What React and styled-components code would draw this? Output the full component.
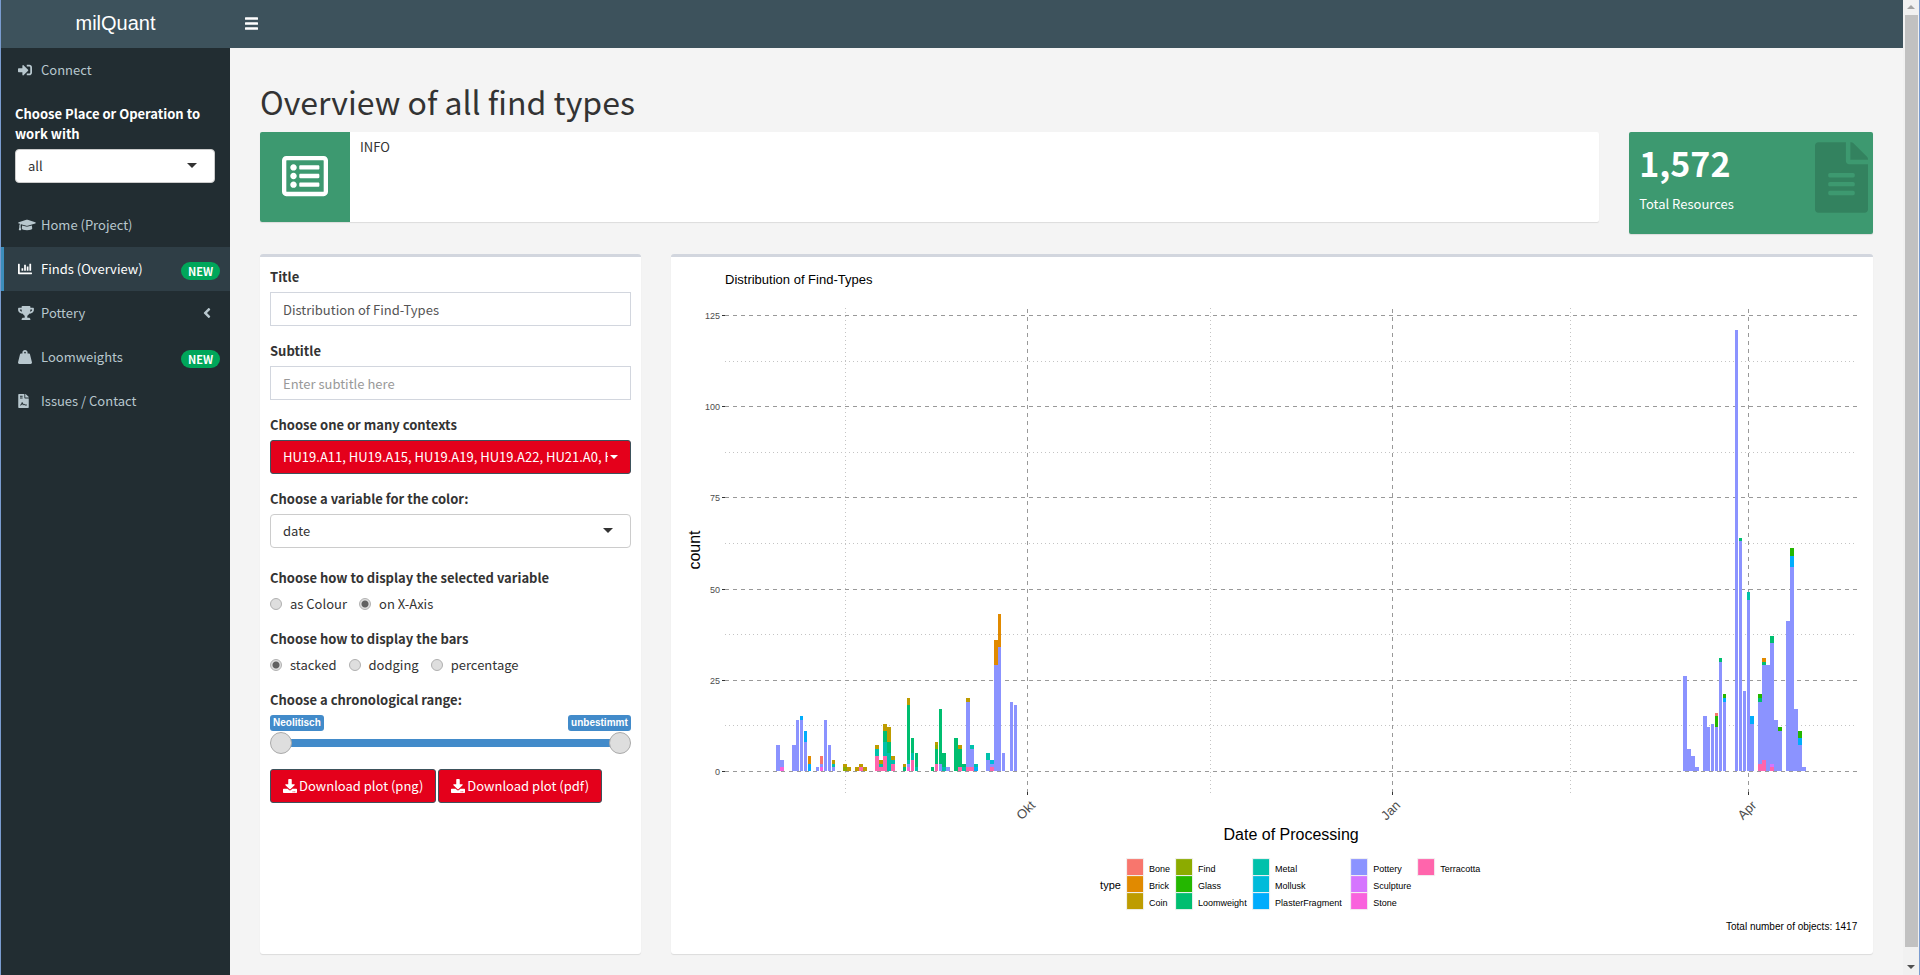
import React, { useState } from "react";
import styled, { createGlobalStyle, css } from "styled-components";
import {
  FaAngleLeft,
  FaChartBar,
  FaDownload,
  FaFileAlt,
  FaFileContract,
  FaGraduationCap,
  FaRegListAlt,
  FaSignInAlt,
  FaTrophy,
  FaWeightHanging,
} from "react-icons/fa";

const sans = `"Noto Sans CJK SC", "Noto Sans", sans-serif`;
const arial = `"Liberation Sans", Arial, sans-serif`;

const GlobalStyle = createGlobalStyle`
  *, *::before, *::after { box-sizing: border-box; }
  body {
    margin: 0;
    background: #f4f4f4;
    color: #333;
    font-family: ${sans};
    font-size: 13px;
    line-height: 20px;
  }
  button, input, select { font: inherit; }
`;

const Shell = styled.div`
  display: flex;
  min-height: 100vh;
  border: solid #7a9cd0;
  border-width: 0 1px;
`;

const Sidebar = styled.aside`
  flex: 0 0 229px;
  background: #222d32;
  color: #fff;
`;

const Logo = styled.a`
  display: block;
  height: 48px;
  background: #3d525c;
  color: #fff;
  font: 20px/46px ${arial};
  text-align: center;
  text-decoration: none;
`;

const NavItem = styled.a`
  display: flex;
  align-items: center;
  height: 44px;
  padding: 0 10px 0 14px;
  border-left: 3px solid transparent;
  color: #b8c7ce;
  text-decoration: none;
  ${(p) =>
    p.$active &&
    css`
      background: #2f3e46;
      border-left-color: #3c8dbc;
      color: #fff;
    `}
`;

const NavIcon = styled.span`
  display: flex;
  flex: 0 0 23px;
  svg {
    width: ${(p) => p.$width}px;
    height: 14px;
  }
`;

const NavText = styled.span`
  flex: 1;
`;

const Badge = styled.span`
  height: 18px;
  padding: 0 7px;
  margin-top: 4px;
  border-radius: 9px;
  background: #00a65a;
  color: #fff;
  font-size: 11px;
  font-weight: 700;
  line-height: 18px;
`;

const Caret = styled.span`
  display: flex;
  padding-right: 9px;
  svg {
    width: 8px;
    height: 16px;
  }
`;

const PlaceField = styled.div`
  padding: 12px 15px 20px 14px;
`;

const Label = styled.label`
  display: block;
  margin-bottom: 5px;
  font-weight: 700;
`;

const SelectBox = styled.div`
  position: relative;
  &::after {
    content: "";
    position: absolute;
    top: 14px;
    right: 18px;
    border: 5px solid transparent;
    border-top-color: #333;
    border-bottom: 0;
    pointer-events: none;
  }
`;

const Select = styled.select`
  display: block;
  width: 100%;
  height: 34px;
  padding: 0 12px;
  appearance: none;
  border: 1px solid #ccc;
  border-radius: 4px;
  background: #fff;
  color: #333;
`;

const Page = styled.div`
  display: flex;
  flex: 1;
  flex-direction: column;
  min-width: 0;
`;

const Topbar = styled.header`
  display: flex;
  align-items: center;
  height: 48px;
  padding: 0 15px 2px;
  background: #3d525c;
`;

const MenuButton = styled.button`
  display: flex;
  padding: 0;
  border: 0;
  background: none;
  color: #fff;
`;

const Main = styled.main`
  padding: 34px 30px 21px;
`;

const Heading = styled.h1`
  margin: 0 0 12px;
  font-size: 32px;
  font-weight: 400;
  line-height: 38px;
`;

const Grid = styled.div`
  display: grid;
  grid-template-columns: repeat(12, minmax(0, 1fr));
  column-gap: 30px;
  row-gap: 20px;
`;

const InfoBox = styled.section`
  grid-column: span 10;
  display: flex;
  align-self: start;
  min-height: 90px;
  border-radius: 2px;
  overflow: hidden;
  background: #fff;
  box-shadow: 0 1px 1px rgba(0, 0, 0, 0.1);
`;

const InfoIcon = styled.div`
  display: flex;
  flex: 0 0 90px;
  align-items: center;
  justify-content: center;
  padding-bottom: 2px;
  background: #3d9970;
  color: #fff;
  font-size: 46px;
`;

const InfoText = styled.div`
  padding: 5px 10px;
`;

const ValueBox = styled.section`
  grid-column: span 2;
  display: flex;
  justify-content: space-between;
  min-height: 102px;
  padding: 10px 5px 10px 10px;
  border-radius: 2px;
  background: #3d9970;
  color: #fff;
  box-shadow: 0 1px 1px rgba(0, 0, 0, 0.1);
  svg {
    width: 53px;
    height: 71px;
    color: rgba(0, 0, 0, 0.15);
  }
`;

const Value = styled.div`
  margin-bottom: 10px;
  font-size: 34px;
  font-weight: 700;
  line-height: 42px;
`;

const Caption = styled.div`
  font-size: 13px;
`;

const Panel = styled.section`
  grid-column: span ${(p) => p.$span};
  padding: 10px;
  border-top: 3px solid #d2d6de;
  border-radius: 3px;
  background: #fff;
  box-shadow: 0 1px 1px rgba(0, 0, 0, 0.1);
`;

const Field = styled.div`
  margin-bottom: ${(p) => (p.$wide ? 20 : 15)}px;
`;

const TextInput = styled.input`
  display: block;
  width: 100%;
  height: 34px;
  padding: 0 12px;
  border: 1px solid #d2d6de;
  border-radius: 0;
  color: #555;
  &::placeholder {
    color: #999;
  }
`;

const redButton = css`
  height: 34px;
  padding: 0 12px;
  border: 1px solid #3d525c;
  border-radius: 3px;
  background: #e4001b;
  color: #fff;
`;

const PickerButton = styled.button`
  ${redButton}
  display: flex;
  align-items: center;
  gap: 2px;
  width: 100%;
  &::after {
    content: "";
    border: 4px solid transparent;
    border-top-color: #fff;
    border-bottom: 0;
  }
`;

const PickerText = styled.span`
  flex: 1;
  overflow: hidden;
  text-align: left;
  white-space: nowrap;
`;

const RadioField = styled.fieldset`
  margin: 0 0 15px;
  padding: 0;
  border: 0;
`;

const Legend = styled.legend`
  margin-bottom: 6px;
  padding: 0;
  font-weight: 700;
`;

const RadioRow = styled.div`
  display: flex;
  gap: 12px;
`;

const RadioLabel = styled.label`
  display: flex;
  align-items: center;
  gap: 8px;
`;

const Radio = styled.input`
  width: 12px;
  height: 12px;
  margin: 0;
  appearance: none;
  border: 1px solid #b0b0b0;
  border-radius: 50%;
  background: #dedede;
  &:checked {
    background: radial-gradient(circle, #606060 0 3px, #dedede 4px);
  }
`;

const RangeField = styled.div`
  margin-bottom: 15px;
`;

const RangeTags = styled.div`
  display: flex;
  justify-content: space-between;
`;

const RangeTag = styled.output`
  height: 16px;
  padding: 0 3px;
  border-radius: 3px;
  background: #428bca;
  color: #fff;
  font: bold 10px/16px ${arial};
`;

const RangeTrack = styled.div`
  display: grid;
  margin-top: 1px;
  background: linear-gradient(#428bca, #428bca) center / calc(100% - 22px) 8px no-repeat;
`;

const Range = styled.input`
  grid-area: 1 / 1;
  width: 100%;
  height: 22px;
  margin: 0;
  appearance: none;
  background: none;
  pointer-events: none;
  &::-webkit-slider-thumb {
    width: 22px;
    height: 22px;
    appearance: none;
    border: 1px solid #aaa;
    border-radius: 50%;
    background: #dedede;
    pointer-events: auto;
  }
`;

const Downloads = styled.div`
  display: flex;
  flex-wrap: wrap;
  gap: 2px;
`;

const DownloadButton = styled.button`
  ${redButton}
  display: flex;
  align-items: center;
  gap: 2px;
  svg {
    width: 14px;
    height: 14px;
  }
`;

const ChartSvg = styled.svg`
  display: block;
  width: 100%;
  height: auto;
  font-family: ${arial};
`;

const Scrollbar = styled.div`
  position: sticky;
  top: 0;
  display: flex;
  flex: 0 0 16px;
  flex-direction: column;
  align-items: center;
  height: 100vh;
  background: #f1f1f1;
`;

const ScrollArrow = styled.span`
  width: 8px;
  height: 4px;
  margin: ${(p) => (p.$up ? "5px 0 6px" : "18px 0 6px")};
  background: ${(p) => (p.$up ? "#a3a3a3" : "#505050")};
  clip-path: ${(p) =>
    p.$up ? "polygon(50% 0, 100% 100%, 0 100%)" : "polygon(0 0, 100% 0, 50% 100%)"};
`;

const ScrollThumb = styled.span`
  flex: 1;
  width: 13px;
  background: #c1c1c1;
`;

const COLORS = {
  Bone: "#f8766d",
  Brick: "#e18a00",
  Coin: "#be9c00",
  Find: "#8cab00",
  Glass: "#24b700",
  Loomweight: "#00be70",
  Metal: "#00c1ab",
  Mollusk: "#00bbda",
  PlasterFragment: "#00acfc",
  Pottery: "#8b93ff",
  Sculpture: "#d575fe",
  Stone: "#f962dd",
  Terracotta: "#ff65ac",
};

const CODES = {
  b: "Bone",
  B: "Brick",
  C: "Coin",
  F: "Find",
  G: "Glass",
  L: "Loomweight",
  M: "Metal",
  K: "Mollusk",
  R: "PlasterFragment",
  P: "Pottery",
  U: "Sculpture",
  S: "Stone",
  T: "Terracotta",
};

/* One bar per day: left edge, width, then the counts from the bottom up. */
const BARS = [
  [95, 4, "P7"], [99, 4, "S1 P2"], [111, 4, "P7"], [115, 3, "P14"], [119, 3, "P14 R1"],
  [123, 3, "P8 R3"], [127, 3, "R2 B2"], [135, 3, "P1"], [139, 3, "S1 P1 b2"], [143, 3, "P14"],
  [147, 3, "P7"], [151, 3, "P1 M1 C1"], [162, 4, "F1 C1"], [166, 4, "C1"], [174, 4, "C1"],
  [178, 4, "T1 C1"], [182, 4, "C1"], [194, 4, "T4 M2 C1"], [198, 4, "T1 M1 C1"],
  [202, 4, "T4 M4 L3 C2"], [206, 4, "M5 L3 C4"], [210, 4, "T2 M1 C1"], [222, 3, "L1 C1"],
  [226, 3, "S1 P1 M1 L15 C2"], [230, 3, "T3 M2 L4"], [234, 3, "M1 L4"], [250, 3, "L1"],
  [254, 3, "T2 L4 F1 C1"], [258, 3, "P2 L15"], [261, 4, "M1 L4"], [265, 4, "P1"],
  [273, 4, "L9"], [277, 4, "T1 L5 C1"], [281, 4, "M1 L1"], [285, 4, "T1 P18 C1"],
  [289, 4, "T1 P5 M1"], [293, 4, "R1 M1"], [305, 4, "P3 M2"], [309, 4, "T1 P1 K1"],
  [313, 4, "P29 B7"], [317, 3, "P34 B9"], [321, 3, "P5"], [329, 3, "P19"], [333, 3, "P18"],
  [1002, 4, "P26"], [1006, 4, "P6"], [1010, 4, "P4"], [1014, 4, "P1"], [1022, 4, "P15"],
  [1026, 3, "P12"], [1030, 3, "P13"], [1034, 3, "P12 G3 b1"], [1038, 3, "P30 L1"],
  [1042, 3, "P19 R1 G1"], [1054, 3, "P121"], [1058, 3, "P63 L1"], [1062, 3, "P22"],
  [1066, 3, "P47 M2"], [1069, 4, "P13 R2"], [1077, 4, "T2 P17 L1 G1"],
  [1081, 4, "T3 P26 L1 B1"], [1085, 4, "P29"], [1089, 4, "T1 U1 P33 L2"], [1093, 4, "P14"],
  [1097, 4, "P11 G1"], [1105, 4, "P41"], [1109, 4, "P56 R3 G2"], [1113, 4, "P17"],
  [1117, 4, "P7 R2 G2"], [1121, 4, "P1"],
];

const BASE = 504;
const yOf = (n) => BASE - Math.round(n * 3.648);

const LEGEND = [
  [446, ["Bone", "Brick", "Coin"]],
  [495, ["Find", "Glass", "Loomweight"]],
  [572, ["Metal", "Mollusk", "PlasterFragment"]],
  [670, ["Pottery", "Sculpture", "Stone"]],
  [737, ["Terracotta"]],
];

const MONTHS = [
  [346, "Okt"],
  [711, "Jan"],
  [1067, "Apr"],
];

function Bar({ x, width, parts }) {
  let sum = 0;
  return parts.split(" ").map((part, i) => {
    const bottom = yOf(sum);
    sum += Number(part.slice(1));
    const top = yOf(sum);
    return (
      <rect key={i} x={x} y={top} width={width} height={bottom - top} fill={COLORS[CODES[part[0]]]} />
    );
  });
}

function Chart() {
  return (
    <ChartSvg viewBox="0 0 1182 677" role="img" aria-label="Distribution of Find-Types">
      <text x="44" y="17" fontSize="13">Distribution of Find-Types</text>

      <g stroke="#c4c4c4" strokeDasharray="1 3" shapeRendering="crispEdges">
        {[12.5, 37.5, 62.5, 87.5, 112.5].map((n) => (
          <line key={n} x1="44" x2="1176" y1={yOf(n) + 0.5} y2={yOf(n) + 0.5} />
        ))}
        {[164, 529, 889].map((x) => (
          <line key={x} x1={x + 0.5} x2={x + 0.5} y1="41" y2="526" />
        ))}
      </g>
      <g stroke="#999" strokeDasharray="4 4" shapeRendering="crispEdges">
        {[0, 25, 50, 75, 100, 125].map((n) => (
          <line key={n} x1="44" x2="1176" y1={yOf(n) + 0.5} y2={yOf(n) + 0.5} />
        ))}
        {MONTHS.map(([x]) => (
          <line key={x} x1={x + 0.5} x2={x + 0.5} y1="42" y2="525" />
        ))}
      </g>

      <g shapeRendering="crispEdges">
        {BARS.map(([x, width, parts]) => (
          <Bar key={x} x={x} width={width} parts={parts} />
        ))}
      </g>

      <g stroke="#333" shapeRendering="crispEdges">
        {[0, 25, 50, 75, 100, 125].map((n) => (
          <line key={n} x1="41" x2="44" y1={yOf(n) + 0.5} y2={yOf(n) + 0.5} />
        ))}
        {MONTHS.map(([x]) => (
          <line key={x} x1={x + 0.5} x2={x + 0.5} y1="525" y2="528" />
        ))}
      </g>

      <g fill="#4d4d4d" textAnchor="end">
        {[0, 25, 50, 75, 100, 125].map((n) => (
          <text key={n} x="39" y={yOf(n) + 4} fontSize="9">{n}</text>
        ))}
        {MONTHS.map(([x, name]) => (
          <text key={name} fontSize="13" transform={`translate(${x + 9} 539) rotate(-45)`}>{name}</text>
        ))}
      </g>

      <text fontSize="16" textAnchor="middle" transform="translate(19 283) rotate(-90)">count</text>
      <text x="610" y="573" fontSize="16" textAnchor="middle">Date of Processing</text>

      <text x="419" y="622" fontSize="11">type</text>
      {LEGEND.map(([x, names]) =>
        names.map((name, row) => (
          <g key={name}>
            <rect
              x={x - 0.5}
              y={591.5 + row * 17}
              width="17"
              height="17"
              fill={COLORS[name]}
              stroke="#f2f2f2"
            />
            <text x={x + 22} y={605 + row * 17} fontSize="9">{name}</text>
          </g>
        ))
      )}
      <text x="1176" y="663" fontSize="10" textAnchor="end">Total number of objects: 1417</text>
    </ChartSvg>
  );
}

function BarsIcon() {
  return (
    <svg width="13" height="13" viewBox="0 0 13 13" fill="currentColor" aria-hidden="true">
      <rect y="0.2" width="13" height="2.6" rx="0.5" />
      <rect y="5.2" width="13" height="2.6" rx="0.5" />
      <rect y="10.2" width="13" height="2.6" rx="0.5" />
    </svg>
  );
}

function RadioGroup({ legend, name, options, initial }) {
  const [value, setValue] = useState(initial);
  return (
    <RadioField>
      <Legend>{legend}</Legend>
      <RadioRow>
        {options.map((option) => (
          <RadioLabel key={option}>
            <Radio
              type="radio"
              name={name}
              checked={value === option}
              onChange={() => setValue(option)}
            />
            {option}
          </RadioLabel>
        ))}
      </RadioRow>
    </RadioField>
  );
}

function Item({ icon, iconWidth = 14, children, active, badge, nested }) {
  return (
    <NavItem href="#" $active={active}>
      <NavIcon $width={iconWidth}>{icon}</NavIcon>
      <NavText>{children}</NavText>
      {badge && <Badge>NEW</Badge>}
      {nested && <Caret><FaAngleLeft /></Caret>}
    </NavItem>
  );
}

export default function App() {
  return (
    <>
      <GlobalStyle />
      <Shell>
        <Sidebar>
          <Logo href="#">milQuant</Logo>
          <nav>
            <Item icon={<FaSignInAlt />}>Connect</Item>
            <PlaceField>
              <Label htmlFor="place">Choose Place or Operation to work with</Label>
              <SelectBox>
                <Select id="place"><option>all</option></Select>
              </SelectBox>
            </PlaceField>
            <Item icon={<FaGraduationCap />} iconWidth={18}>Home (Project)</Item>
            <Item icon={<FaChartBar />} active badge>Finds (Overview)</Item>
            <Item icon={<FaTrophy />} iconWidth={16} nested>Pottery</Item>
            <Item icon={<FaWeightHanging />} badge>Loomweights</Item>
            <Item icon={<FaFileContract />} iconWidth={11}>Issues / Contact</Item>
          </nav>
        </Sidebar>

        <Page>
          <Topbar>
            <MenuButton type="button" aria-label="Toggle navigation"><BarsIcon /></MenuButton>
          </Topbar>
          <Main>
            <Heading>Overview of all find types</Heading>
            <Grid>
              <InfoBox>
                <InfoIcon><FaRegListAlt /></InfoIcon>
                <InfoText>INFO</InfoText>
              </InfoBox>
              <ValueBox>
                <div>
                  <Value>1,572</Value>
                  <Caption>Total Resources</Caption>
                </div>
                <FaFileAlt />
              </ValueBox>

              <Panel $span={3}>
                <Field>
                  <Label htmlFor="title">Title</Label>
                  <TextInput id="title" type="text" defaultValue="Distribution of Find-Types" />
                </Field>
                <Field>
                  <Label htmlFor="subtitle">Subtitle</Label>
                  <TextInput id="subtitle" type="text" placeholder="Enter subtitle here" />
                </Field>
                <Field>
                  <Label htmlFor="contexts">Choose one or many contexts</Label>
                  <PickerButton id="contexts" type="button">
                    <PickerText>HU19.A11, HU19.A15, HU19.A19, HU19.A22, HU21.A0, HU</PickerText>
                  </PickerButton>
                </Field>
                <Field $wide>
                  <Label htmlFor="variable">Choose a variable for the color:</Label>
                  <SelectBox>
                    <Select id="variable"><option>date</option></Select>
                  </SelectBox>
                </Field>
                <RadioGroup
                  legend="Choose how to display the selected variable"
                  name="display"
                  options={["as Colour", "on X-Axis"]}
                  initial="on X-Axis"
                />
                <RadioGroup
                  legend="Choose how to display the bars"
                  name="bars"
                  options={["stacked", "dodging", "percentage"]}
                  initial="stacked"
                />
                <RangeField>
                  <Label htmlFor="range-from">Choose a chronological range:</Label>
                  <RangeTags>
                    <RangeTag htmlFor="range-from">Neolitisch</RangeTag>
                    <RangeTag htmlFor="range-to">unbestimmt</RangeTag>
                  </RangeTags>
                  <RangeTrack>
                    <Range id="range-from" type="range" min="0" max="10" defaultValue="0" />
                    <Range
                      id="range-to"
                      type="range"
                      min="0"
                      max="10"
                      defaultValue="10"
                      aria-label="End of the chronological range"
                    />
                  </RangeTrack>
                </RangeField>
                <Downloads>
                  <DownloadButton type="button"><FaDownload />Download plot (png)</DownloadButton>
                  <DownloadButton type="button"><FaDownload />Download plot (pdf)</DownloadButton>
                </Downloads>
              </Panel>

              <Panel $span={9}>
                <Chart />
              </Panel>
            </Grid>
          </Main>
        </Page>

        <Scrollbar aria-hidden="true">
          <ScrollArrow $up />
          <ScrollThumb />
          <ScrollArrow />
        </Scrollbar>
      </Shell>
    </>
  );
}
